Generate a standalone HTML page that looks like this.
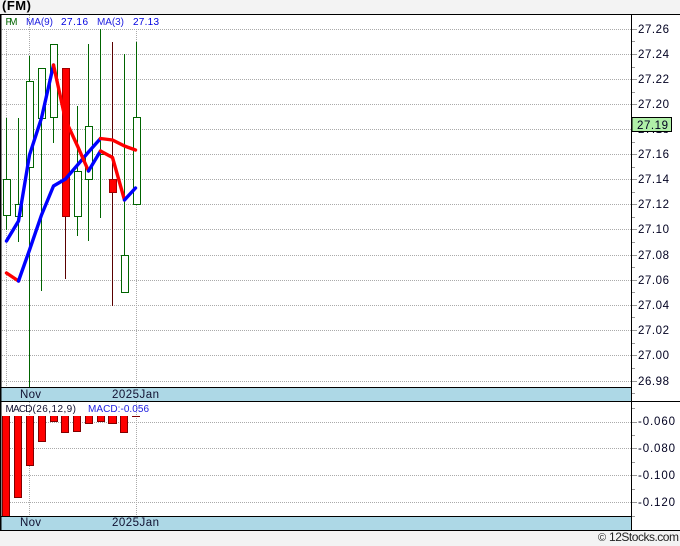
<!DOCTYPE html>
<html><head><meta charset="utf-8">
<style>
html,body{margin:0;padding:0;background:#f3f3f3;width:680px;height:546px;overflow:hidden}
svg{display:block}
text{font-family:"Liberation Sans",sans-serif;font-size:11.5px}
.ax{font-size:11.5px;fill:#000020}
.lb{font-size:10px}
</style></head><body>
<svg width="680" height="546" viewBox="0 0 680 546" xmlns="http://www.w3.org/2000/svg">
<defs><clipPath id="mb"><rect x="0" y="416" width="140" height="100"/></clipPath></defs>
<rect x="0" y="0" width="680" height="546" fill="#f3f3f3"/>
<rect x="0" y="14" width="680" height="517" fill="#fff"/>
<text x="2" y="10" style="font-size:13px;font-weight:bold" fill="#000" textLength="29">(FM)</text>

<g stroke="#aaa" stroke-width="1" stroke-dasharray="1 1" shape-rendering="crispEdges" fill="none">
<path d="M2 29.5H632M2 54.5H632M2 79.5H632M2 104.5H632M2 129.5H632M2 154.5H632M2 179.5H632M2 204.5H632M2 229.5H632M2 255.5H632M2 280.5H632M2 305.5H632M2 330.5H632M2 355.5H632M2 381.5H632"/>
<path d="M6.5 29V387M29.5 15V387M136.5 29V387"/>
<path d="M2 422.5H632M2 448.5H632M2 475.5H632M2 502.5H632"/>
<path d="M6.5 416V516M29.5 402V516M136.5 402V516"/>
</g>

<g fill="#fff" stroke="#006400" stroke-width="1" shape-rendering="crispEdges">
<path d="M6.5 118V179M6.5 216V230M18.5 118V204M18.5 216V242M29.5 56V81M29.5 167V387M41.5 68V118M41.5 118V291M53.5 117V143M77.5 106V171M77.5 216V236M88.5 44V126M88.5 179V241M100.5 29V218M124.5 54V255M136.5 42V117" fill="none"/>
<rect x="3.5" y="179.5" width="7" height="36"/>
<rect x="15.5" y="204.5" width="7" height="12"/>
<rect x="26.5" y="81.5" width="7" height="86"/>
<rect x="38.5" y="68.5" width="7" height="50"/>
<rect x="50.5" y="44.5" width="7" height="73"/>
<rect x="74.5" y="171.5" width="7" height="45"/>
<rect x="85.5" y="126.5" width="7" height="53"/>
<rect x="121.5" y="255.5" width="7" height="37"/>
<rect x="133.5" y="117.5" width="7" height="87"/>
<path d="M97 154.5H105" fill="none"/>
</g>
<g stroke="#5a0000" stroke-width="1" shape-rendering="crispEdges" fill="none">
<path d="M65.5 216V279M112.5 42V306"/>
</g>
<g fill="#f00" stroke="#a00000" stroke-width="1" shape-rendering="crispEdges">
<rect x="62.5" y="68.5" width="7" height="148"/>
<rect x="109.5" y="179.5" width="7" height="13"/>
</g>

<g fill="none" stroke-width="3.4" stroke-linejoin="round" stroke-linecap="round">
<path d="M6.5 273L18.5 281" stroke="#f00"/>
<path d="M6.5 241L18.5 221L29.5 155L41.5 118L53.5 65" stroke="#00f"/>
<path d="M18.5 281L29.5 250L41.5 215L53.5 186L65.5 179L77.5 165L88.5 152L100.5 138.5" stroke="#00f"/>
<path d="M53.5 65L65.5 120L77.5 146L88.5 171" stroke="#f00"/>
<path d="M88.5 171L100.5 151" stroke="#00f"/>
<path d="M100.5 151L112.5 157.5L124.5 200" stroke="#f00"/>
<path d="M124.5 200L135.5 188" stroke="#00f"/>
<path d="M100.5 138.5L112.5 140L124.5 146L135.5 150" stroke="#f00"/>
</g>

<text class="lb" x="5.5" y="25" fill="#006400" textLength="12">FM</text>
<text class="lb" x="26" y="25" fill="#2020e0" textLength="27">MA(9)</text>
<text class="lb" x="61" y="25" fill="#0000e0" textLength="27">27.16</text>
<text class="lb" x="97" y="25" fill="#2020e0" textLength="27">MA(3)</text>
<text class="lb" x="133" y="25" fill="#0000e0" textLength="26">27.13</text>

<!-- MACD bars -->
<g clip-path="url(#mb)" fill="#f00" stroke="#800000" stroke-width="1" shape-rendering="crispEdges">
<rect x="2.5" y="415.5" width="7" height="102"/>
<rect x="14.5" y="415.5" width="7" height="82"/>
<rect x="26.5" y="415.5" width="7" height="50"/>
<rect x="38.5" y="415.5" width="7" height="26"/>
<rect x="50.5" y="415.5" width="7" height="6"/>
<rect x="61.5" y="415.5" width="7" height="17"/>
<rect x="73.5" y="415.5" width="7" height="16"/>
<rect x="85.5" y="415.5" width="7" height="8"/>
<rect x="97.5" y="415.5" width="7" height="6"/>
<rect x="108.5" y="415.5" width="8" height="8"/>
<rect x="120.5" y="415.5" width="7" height="17"/>
</g>
<path d="M132 416.5H140" stroke="#800000" stroke-width="1" shape-rendering="crispEdges" fill="none"/>
<text class="lb" x="5.5" y="412" fill="#101030" textLength="27">MACD</text>
<text class="lb" x="32.5" y="412" fill="#101030" textLength="43.5">(26,12,9)</text>
<text class="lb" x="88" y="412" fill="#2020e0" textLength="61">MACD:-0.056</text>

<!-- bands -->
<rect x="0" y="387" width="632" height="14" fill="#add8e6"/>
<rect x="0" y="516" width="632" height="14" fill="#add8e6"/>
<g fill="#101030">
<text x="20" y="398" textLength="21">Nov</text>
<text x="112" y="398" textLength="47">2025Jan</text>
<text x="20" y="526" textLength="21">Nov</text>
<text x="112" y="526" textLength="47">2025Jan</text>
</g>

<!-- axis ticks -->
<g stroke="#999" stroke-width="1" shape-rendering="crispEdges" fill="none">
<path d="M632 29.5H637M632 54.5H637M632 79.5H637M632 104.5H637M632 154.5H637M632 179.5H637M632 204.5H637M632 229.5H637M632 255.5H637M632 280.5H637M632 305.5H637M632 330.5H637M632 355.5H637M632 381.5H637"/>
<path d="M632 41.5H635M632 67.5H635M632 92.5H635M632 142.5H635M632 167.5H635M632 192.5H635M632 217.5H635M632 242.5H635M632 267.5H635M632 292.5H635M632 317.5H635M632 343.5H635M632 368.5H635M632 393.5H635"/>
<path d="M632 422.5H637M632 448.5H637M632 475.5H637M632 502.5H637"/>
<path d="M632 408.5H635M632 435.5H635M632 462.5H635M632 489.5H635M632 516.5H635"/>
</g>

<!-- frame -->
<g stroke="#000" stroke-width="1" shape-rendering="crispEdges" fill="none">
<path d="M0 14.5H680M0 387.5H632M0 401.5H680M0 516.5H632M0 530.5H680"/>
<path d="M631.5 14V531"/>
</g>
<rect x="0" y="14" width="1.5" height="517" fill="#000"/>

<text class="ax" x="638" y="33" textLength="31">27.26</text>
<text class="ax" x="638" y="58" textLength="31">27.24</text>
<text class="ax" x="638" y="83" textLength="31">27.22</text>
<text class="ax" x="638" y="108" textLength="31">27.20</text>
<text class="ax" x="638" y="133" textLength="31">27.18</text>
<text class="ax" x="638" y="158" textLength="31">27.16</text>
<text class="ax" x="638" y="183" textLength="31">27.14</text>
<text class="ax" x="638" y="208" textLength="31">27.12</text>
<text class="ax" x="638" y="233" textLength="31">27.10</text>
<text class="ax" x="638" y="259" textLength="31">27.08</text>
<text class="ax" x="638" y="284" textLength="31">27.06</text>
<text class="ax" x="638" y="309" textLength="31">27.04</text>
<text class="ax" x="638" y="334" textLength="31">27.02</text>
<text class="ax" x="638" y="359" textLength="31">27.00</text>
<text class="ax" x="638" y="385" textLength="31">26.98</text>
<text class="ax" x="638" y="425" textLength="37">-0.060</text>
<text class="ax" x="638" y="452" textLength="37">-0.080</text>
<text class="ax" x="638" y="479" textLength="37">-0.100</text>
<text class="ax" x="638" y="506" textLength="37">-0.120</text>

<rect x="632" y="117.5" width="39.5" height="14" fill="#b0f0a8" stroke="#000" stroke-width="1" shape-rendering="crispEdges"/>
<text class="ax" x="637" y="129" textLength="31">27.19</text>

<text x="598" y="541" style="font-size:11px" fill="#222">©</text>
<text x="609" y="541" style="font-size:12px" fill="#222" textLength="70">12Stocks.com</text>
</svg>
</body></html>
